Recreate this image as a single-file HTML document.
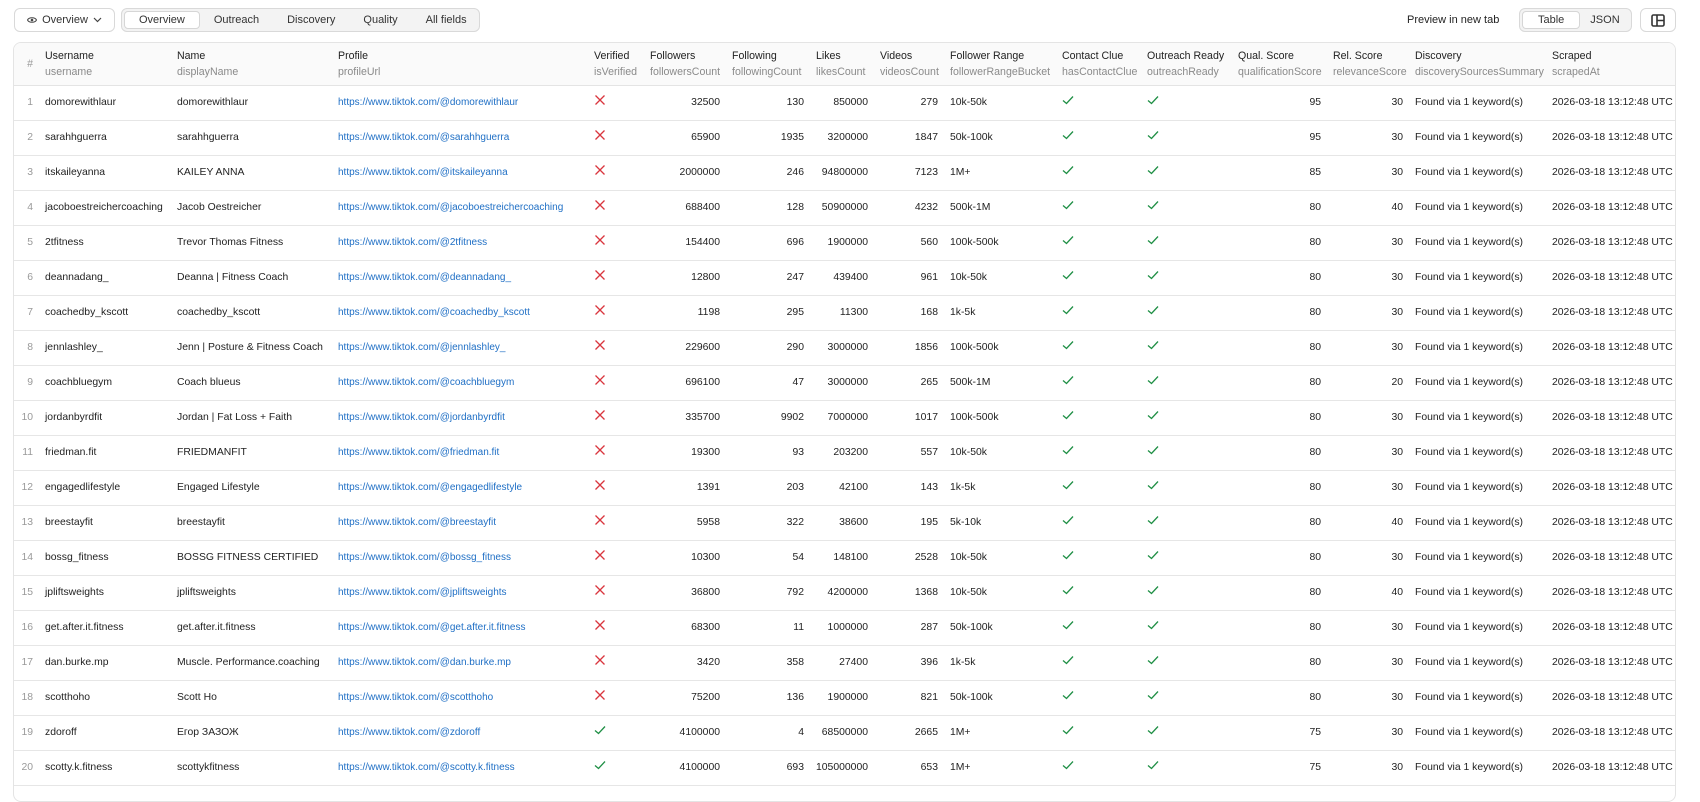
<!DOCTYPE html>
<html><head><meta charset="utf-8"><style>
*{box-sizing:border-box;margin:0;padding:0}
body{width:1700px;height:788px;overflow:hidden;background:#fff;font-family:"Liberation Sans","Noto Sans CJK SC",sans-serif;font-size:10.4px;color:#222;position:relative}
.btn{position:absolute;top:8px;height:24px;border:1px solid #d9d9d9;border-radius:6px;background:#fff;display:flex;align-items:center;white-space:nowrap;font-size:11px}
.seg{background:#f3f3f3;padding:2px}
.seg span{padding:0 14px;height:18px;line-height:18px;color:#333;white-space:nowrap}
.seg span.on{background:#fff;border:1px solid #d6d6d6;border-radius:4px;line-height:16px}
.wrap{position:absolute;left:13px;top:42px;width:1663px;height:760px;border:1px solid #e4e4e4;border-radius:8px;overflow:hidden}
table{border-collapse:collapse;table-layout:fixed;width:1663px}
th{height:42px;background:#fafafa;font-weight:normal;text-align:left;vertical-align:middle;padding:0 6px;border-bottom:1px solid #e4e4e4;line-height:16px;white-space:nowrap;overflow:hidden;color:#222;font-size:10.6px}
th i{display:block;font-style:normal;color:#8a8a8a}
td{height:35px;border-bottom:1px solid #e6e6e6;padding:0 6px;white-space:nowrap;overflow:hidden;vertical-align:middle}
td:first-child,th:first-child{color:#999;text-align:right;padding-right:6px}
.r{text-align:right}
a{color:#1f6fc5;text-decoration:none;font-size:10px}
.x,.c{display:inline-block;width:12px;height:12px;vertical-align:-1px;margin-top:-6px}
</style></head><body>
<div class="btn" style="left:14px;width:101px;justify-content:center;gap:5px;color:#333">
<svg width="10" height="8" viewBox="0 0 10 8"><path d="M0.5 4C2 1 8 1 9.5 4C8 7 2 7 0.5 4Z" fill="none" stroke="#444" stroke-width="1"/><circle cx="5" cy="4" r="1.3" fill="#444"/></svg>
<span>Overview</span>
<svg width="9" height="6" viewBox="0 0 9 6"><path d="M1 1L4.5 4.5L8 1" fill="none" stroke="#444" stroke-width="1.2"/></svg></div>
<div class="btn seg" style="left:121px;width:359px">
<span class="on">Overview</span><span>Outreach</span><span>Discovery</span><span>Quality</span><span>All fields</span></div>
<div style="position:absolute;left:1407px;top:14px;color:#222;font-size:11px">Preview in new tab</div>
<div class="btn seg" style="left:1519px;width:113px"><span class="on" style="padding:0 15px">Table</span><span style="padding:0 10px">JSON</span></div>
<div class="btn" style="left:1640px;width:36px;justify-content:center">
<svg width="14" height="13" viewBox="0 0 14 13"><rect x="1" y="1" width="12" height="11" rx="1.5" fill="none" stroke="#333" stroke-width="1.6"/><path d="M6 1V12M6 6.5H13" stroke="#333" stroke-width="1.6"/></svg></div>
<svg width="0" height="0" style="position:absolute"><defs>
<symbol id="X" viewBox="0 0 12 12"><path d="M1.5 1.5L10.5 10.5M10.5 1.5L1.5 10.5" stroke="#d9363e" stroke-width="1.3"/></symbol>
<symbol id="C" viewBox="0 0 12 12"><path d="M1 6.5L4.5 9.5L11 2.5" fill="none" stroke="#1f8f45" stroke-width="1.3"/></symbol></defs></svg>
<div class="wrap"><table>
<colgroup><col style="width:25px"><col style="width:132px"><col style="width:161px"><col style="width:256px"><col style="width:56px"><col style="width:82px"><col style="width:84px"><col style="width:64px"><col style="width:70px"><col style="width:112px"><col style="width:85px"><col style="width:91px"><col style="width:95px"><col style="width:82px"><col style="width:137px"><col style="width:131px"></colgroup>
<tr><th>#</th><th>Username<i>username</i></th><th>Name<i>displayName</i></th><th>Profile<i>profileUrl</i></th><th>Verified<i>isVerified</i></th><th>Followers<i>followersCount</i></th><th>Following<i>followingCount</i></th><th>Likes<i>likesCount</i></th><th>Videos<i>videosCount</i></th><th>Follower Range<i>followerRangeBucket</i></th><th>Contact Clue<i>hasContactClue</i></th><th>Outreach Ready<i>outreachReady</i></th><th>Qual. Score<i>qualificationScore</i></th><th>Rel. Score<i>relevanceScore</i></th><th>Discovery<i>discoverySourcesSummary</i></th><th>Scraped<i>scrapedAt</i></th></tr>
<tr><td>1</td><td>domorewithlaur</td><td>domorewithlaur</td><td><a>https://www.tiktok.com/@domorewithlaur</a></td><td><svg class="x"><use href="#X"/></svg></td><td class="r">32500</td><td class="r">130</td><td class="r">850000</td><td class="r">279</td><td>10k-50k</td><td><svg class="c"><use href="#C"/></svg></td><td><svg class="c"><use href="#C"/></svg></td><td class="r">95</td><td class="r">30</td><td>Found via 1 keyword(s)</td><td>2026-03-18 13:12:48 UTC</td></tr>
<tr><td>2</td><td>sarahhguerra</td><td>sarahhguerra</td><td><a>https://www.tiktok.com/@sarahhguerra</a></td><td><svg class="x"><use href="#X"/></svg></td><td class="r">65900</td><td class="r">1935</td><td class="r">3200000</td><td class="r">1847</td><td>50k-100k</td><td><svg class="c"><use href="#C"/></svg></td><td><svg class="c"><use href="#C"/></svg></td><td class="r">95</td><td class="r">30</td><td>Found via 1 keyword(s)</td><td>2026-03-18 13:12:48 UTC</td></tr>
<tr><td>3</td><td>itskaileyanna</td><td>KAILEY ANNA</td><td><a>https://www.tiktok.com/@itskaileyanna</a></td><td><svg class="x"><use href="#X"/></svg></td><td class="r">2000000</td><td class="r">246</td><td class="r">94800000</td><td class="r">7123</td><td>1M+</td><td><svg class="c"><use href="#C"/></svg></td><td><svg class="c"><use href="#C"/></svg></td><td class="r">85</td><td class="r">30</td><td>Found via 1 keyword(s)</td><td>2026-03-18 13:12:48 UTC</td></tr>
<tr><td>4</td><td>jacoboestreichercoaching</td><td>Jacob Oestreicher</td><td><a>https://www.tiktok.com/@jacoboestreichercoaching</a></td><td><svg class="x"><use href="#X"/></svg></td><td class="r">688400</td><td class="r">128</td><td class="r">50900000</td><td class="r">4232</td><td>500k-1M</td><td><svg class="c"><use href="#C"/></svg></td><td><svg class="c"><use href="#C"/></svg></td><td class="r">80</td><td class="r">40</td><td>Found via 1 keyword(s)</td><td>2026-03-18 13:12:48 UTC</td></tr>
<tr><td>5</td><td>2tfitness</td><td>Trevor Thomas Fitness</td><td><a>https://www.tiktok.com/@2tfitness</a></td><td><svg class="x"><use href="#X"/></svg></td><td class="r">154400</td><td class="r">696</td><td class="r">1900000</td><td class="r">560</td><td>100k-500k</td><td><svg class="c"><use href="#C"/></svg></td><td><svg class="c"><use href="#C"/></svg></td><td class="r">80</td><td class="r">30</td><td>Found via 1 keyword(s)</td><td>2026-03-18 13:12:48 UTC</td></tr>
<tr><td>6</td><td>deannadang_</td><td>Deanna | Fitness Coach</td><td><a>https://www.tiktok.com/@deannadang_</a></td><td><svg class="x"><use href="#X"/></svg></td><td class="r">12800</td><td class="r">247</td><td class="r">439400</td><td class="r">961</td><td>10k-50k</td><td><svg class="c"><use href="#C"/></svg></td><td><svg class="c"><use href="#C"/></svg></td><td class="r">80</td><td class="r">30</td><td>Found via 1 keyword(s)</td><td>2026-03-18 13:12:48 UTC</td></tr>
<tr><td>7</td><td>coachedby_kscott</td><td>coachedby_kscott</td><td><a>https://www.tiktok.com/@coachedby_kscott</a></td><td><svg class="x"><use href="#X"/></svg></td><td class="r">1198</td><td class="r">295</td><td class="r">11300</td><td class="r">168</td><td>1k-5k</td><td><svg class="c"><use href="#C"/></svg></td><td><svg class="c"><use href="#C"/></svg></td><td class="r">80</td><td class="r">30</td><td>Found via 1 keyword(s)</td><td>2026-03-18 13:12:48 UTC</td></tr>
<tr><td>8</td><td>jennlashley_</td><td>Jenn | Posture &amp; Fitness Coach</td><td><a>https://www.tiktok.com/@jennlashley_</a></td><td><svg class="x"><use href="#X"/></svg></td><td class="r">229600</td><td class="r">290</td><td class="r">3000000</td><td class="r">1856</td><td>100k-500k</td><td><svg class="c"><use href="#C"/></svg></td><td><svg class="c"><use href="#C"/></svg></td><td class="r">80</td><td class="r">30</td><td>Found via 1 keyword(s)</td><td>2026-03-18 13:12:48 UTC</td></tr>
<tr><td>9</td><td>coachbluegym</td><td>Coach blueus</td><td><a>https://www.tiktok.com/@coachbluegym</a></td><td><svg class="x"><use href="#X"/></svg></td><td class="r">696100</td><td class="r">47</td><td class="r">3000000</td><td class="r">265</td><td>500k-1M</td><td><svg class="c"><use href="#C"/></svg></td><td><svg class="c"><use href="#C"/></svg></td><td class="r">80</td><td class="r">20</td><td>Found via 1 keyword(s)</td><td>2026-03-18 13:12:48 UTC</td></tr>
<tr><td>10</td><td>jordanbyrdfit</td><td>Jordan | Fat Loss + Faith</td><td><a>https://www.tiktok.com/@jordanbyrdfit</a></td><td><svg class="x"><use href="#X"/></svg></td><td class="r">335700</td><td class="r">9902</td><td class="r">7000000</td><td class="r">1017</td><td>100k-500k</td><td><svg class="c"><use href="#C"/></svg></td><td><svg class="c"><use href="#C"/></svg></td><td class="r">80</td><td class="r">30</td><td>Found via 1 keyword(s)</td><td>2026-03-18 13:12:48 UTC</td></tr>
<tr><td>11</td><td>friedman.fit</td><td>FRIEDMANFIT</td><td><a>https://www.tiktok.com/@friedman.fit</a></td><td><svg class="x"><use href="#X"/></svg></td><td class="r">19300</td><td class="r">93</td><td class="r">203200</td><td class="r">557</td><td>10k-50k</td><td><svg class="c"><use href="#C"/></svg></td><td><svg class="c"><use href="#C"/></svg></td><td class="r">80</td><td class="r">30</td><td>Found via 1 keyword(s)</td><td>2026-03-18 13:12:48 UTC</td></tr>
<tr><td>12</td><td>engagedlifestyle</td><td>Engaged Lifestyle</td><td><a>https://www.tiktok.com/@engagedlifestyle</a></td><td><svg class="x"><use href="#X"/></svg></td><td class="r">1391</td><td class="r">203</td><td class="r">42100</td><td class="r">143</td><td>1k-5k</td><td><svg class="c"><use href="#C"/></svg></td><td><svg class="c"><use href="#C"/></svg></td><td class="r">80</td><td class="r">30</td><td>Found via 1 keyword(s)</td><td>2026-03-18 13:12:48 UTC</td></tr>
<tr><td>13</td><td>breestayfit</td><td>breestayfit</td><td><a>https://www.tiktok.com/@breestayfit</a></td><td><svg class="x"><use href="#X"/></svg></td><td class="r">5958</td><td class="r">322</td><td class="r">38600</td><td class="r">195</td><td>5k-10k</td><td><svg class="c"><use href="#C"/></svg></td><td><svg class="c"><use href="#C"/></svg></td><td class="r">80</td><td class="r">40</td><td>Found via 1 keyword(s)</td><td>2026-03-18 13:12:48 UTC</td></tr>
<tr><td>14</td><td>bossg_fitness</td><td>BOSSG FITNESS CERTIFIED</td><td><a>https://www.tiktok.com/@bossg_fitness</a></td><td><svg class="x"><use href="#X"/></svg></td><td class="r">10300</td><td class="r">54</td><td class="r">148100</td><td class="r">2528</td><td>10k-50k</td><td><svg class="c"><use href="#C"/></svg></td><td><svg class="c"><use href="#C"/></svg></td><td class="r">80</td><td class="r">30</td><td>Found via 1 keyword(s)</td><td>2026-03-18 13:12:48 UTC</td></tr>
<tr><td>15</td><td>jpliftsweights</td><td>jpliftsweights</td><td><a>https://www.tiktok.com/@jpliftsweights</a></td><td><svg class="x"><use href="#X"/></svg></td><td class="r">36800</td><td class="r">792</td><td class="r">4200000</td><td class="r">1368</td><td>10k-50k</td><td><svg class="c"><use href="#C"/></svg></td><td><svg class="c"><use href="#C"/></svg></td><td class="r">80</td><td class="r">40</td><td>Found via 1 keyword(s)</td><td>2026-03-18 13:12:48 UTC</td></tr>
<tr><td>16</td><td>get.after.it.fitness</td><td>get.after.it.fitness</td><td><a>https://www.tiktok.com/@get.after.it.fitness</a></td><td><svg class="x"><use href="#X"/></svg></td><td class="r">68300</td><td class="r">11</td><td class="r">1000000</td><td class="r">287</td><td>50k-100k</td><td><svg class="c"><use href="#C"/></svg></td><td><svg class="c"><use href="#C"/></svg></td><td class="r">80</td><td class="r">30</td><td>Found via 1 keyword(s)</td><td>2026-03-18 13:12:48 UTC</td></tr>
<tr><td>17</td><td>dan.burke.mp</td><td>Muscle. Performance.coaching</td><td><a>https://www.tiktok.com/@dan.burke.mp</a></td><td><svg class="x"><use href="#X"/></svg></td><td class="r">3420</td><td class="r">358</td><td class="r">27400</td><td class="r">396</td><td>1k-5k</td><td><svg class="c"><use href="#C"/></svg></td><td><svg class="c"><use href="#C"/></svg></td><td class="r">80</td><td class="r">30</td><td>Found via 1 keyword(s)</td><td>2026-03-18 13:12:48 UTC</td></tr>
<tr><td>18</td><td>scotthoho</td><td>Scott Ho</td><td><a>https://www.tiktok.com/@scotthoho</a></td><td><svg class="x"><use href="#X"/></svg></td><td class="r">75200</td><td class="r">136</td><td class="r">1900000</td><td class="r">821</td><td>50k-100k</td><td><svg class="c"><use href="#C"/></svg></td><td><svg class="c"><use href="#C"/></svg></td><td class="r">80</td><td class="r">30</td><td>Found via 1 keyword(s)</td><td>2026-03-18 13:12:48 UTC</td></tr>
<tr><td>19</td><td>zdoroff</td><td>Егор ЗАЗОЖ</td><td><a>https://www.tiktok.com/@zdoroff</a></td><td><svg class="c"><use href="#C"/></svg></td><td class="r">4100000</td><td class="r">4</td><td class="r">68500000</td><td class="r">2665</td><td>1M+</td><td><svg class="c"><use href="#C"/></svg></td><td><svg class="c"><use href="#C"/></svg></td><td class="r">75</td><td class="r">30</td><td>Found via 1 keyword(s)</td><td>2026-03-18 13:12:48 UTC</td></tr>
<tr><td>20</td><td>scotty.k.fitness</td><td>scottykfitness</td><td><a>https://www.tiktok.com/@scotty.k.fitness</a></td><td><svg class="c"><use href="#C"/></svg></td><td class="r">4100000</td><td class="r">693</td><td class="r">105000000</td><td class="r">653</td><td>1M+</td><td><svg class="c"><use href="#C"/></svg></td><td><svg class="c"><use href="#C"/></svg></td><td class="r">75</td><td class="r">30</td><td>Found via 1 keyword(s)</td><td>2026-03-18 13:12:48 UTC</td></tr>
<tr><td></td><td></td><td></td><td></td><td></td><td></td><td></td><td></td><td></td><td></td><td></td><td></td><td></td><td></td><td></td><td></td></tr>
</table></div>
</body></html>
